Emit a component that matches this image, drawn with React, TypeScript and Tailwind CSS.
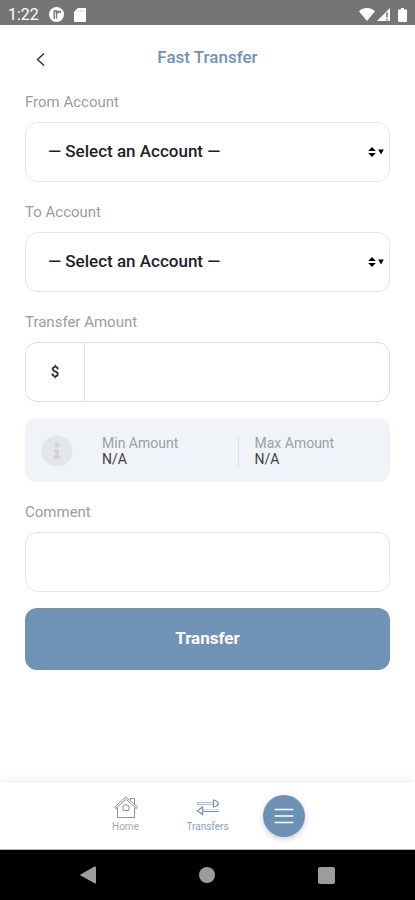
import React, { useState } from 'react';

const ACCOUNTS = [{ value: '', label: '— Select an Account —' }];

const StatusBar: React.FC = () => (
  <div className="flex h-[25px] shrink-0 items-center justify-between bg-[#757575] pt-1 pl-2 pr-2 text-white">
    <div className="flex items-center">
      <span className="w-[41px] text-base leading-5">1:22</span>
      <svg width="15" height="15" viewBox="0 0 15 15" aria-hidden="true">
        <circle cx="7.5" cy="7.5" r="7.5" fill="#fff" />
        <path d="M5.2 12V4h2.3v7.500M9 6.500V4.500h2.200v1.800" fill="none" stroke="#757575" strokeWidth="1.400" />
      </svg>
      <svg className="ml-2.5" width="12" height="14" viewBox="0 0 12 14" aria-hidden="true">
        <path d="M4 0h7a1 1 0 0 1 1 1v12a1 1 0 0 1-1 1H1a1 1 0 0 1-1-1V4z" fill="#fff" />
        <path d="M4.5 2v2M6.8 2v2M9 2v2" stroke="#ccc" strokeWidth="1" />
      </svg>
    </div>
    <div className="flex items-center">
      <svg width="16" height="13" viewBox="0 0 16 13" aria-hidden="true">
        <path d="M8 13 0 3.2C2.2 1.200 5 0 8 0s5.800 1.200 8 3.200z" fill="#fff" />
      </svg>
      <svg className="ml-0.5" width="13" height="13" viewBox="0 0 13 13" aria-hidden="true">
        <path d="M13 0v13H0z" fill="#fff" />
        <path d="M10 4.500v5M10 11v1.500" stroke="#757575" strokeWidth="1.600" />
      </svg>
      <svg className="ml-2" width="9" height="14" viewBox="0 0 9 14" aria-hidden="true">
        <path d="M3 0h3v1.500h2a1 1 0 0 1 1 1V13a1 1 0 0 1-1 1H1a1 1 0 0 1-1-1V2.500a1 1 0 0 1 1-1h2z" fill="#fff" />
      </svg>
    </div>
  </div>
);

interface AccountSelectProps {
  id: string;
  label: string;
}

const AccountSelect: React.FC<AccountSelectProps> = ({ id, label }) => {
  const [value, setValue] = useState('');

  return (
    <div className="mb-5">
      <label htmlFor={id} className="mb-2.5 block text-[15px] leading-5 text-[#9b9b9f]">{label}</label>
      <div className="relative">
        <select
          id={id}
          value={value}
          onChange={(e) => setValue(e.target.value)}
          className="h-[60px] w-full appearance-none rounded-xl border border-[#e6e6e8] bg-white pl-[22px] pr-8 text-[17px] font-medium text-[#1f2025]"
        >
          {ACCOUNTS.map((a) => (
            <option key={a.value} value={a.value}>{a.label}</option>
          ))}
        </select>
        <svg
          className="pointer-events-none absolute right-1.5 top-6 text-black"
          width="16"
          height="12"
          viewBox="0 0 16 12"
          fill="currentColor"
          aria-hidden="true"
        >
          <path d="M4 1 7.800 5H.2zM4 11 .2 7h7.600zM10.200 3.500h5.600L13 8.500z" />
        </svg>
      </div>
    </div>
  );
};

export default function App() {
  const [amount, setAmount] = useState('');
  const [comment, setComment] = useState('');

  return (
    <div className="flex min-h-screen flex-col bg-white font-[Roboto,sans-serif]">
      <StatusBar />

      <header className="grid h-[67px] shrink-0 grid-cols-[1fr_auto_1fr] items-center px-6">
        <button type="button" aria-label="Back" className="flex size-8 items-center justify-center text-[#2e2a4f]">
          <svg width="9" height="14" viewBox="0 0 9 14" fill="none" stroke="currentColor" strokeWidth="1.400" aria-hidden="true">
            <path d="M8 1.500 1.500 7.500 8 13.500" />
          </svg>
        </button>
        <h1 className="pb-0.5 text-[17px] font-medium text-[#7092b5]">Fast Transfer</h1>
      </header>

      <form className="flex flex-1 flex-col px-[25px]" onSubmit={(e) => e.preventDefault()}>
        <AccountSelect id="from" label="From Account" />
        <AccountSelect id="to" label="To Account" />

        <label htmlFor="amount" className="mb-2.5 block text-[15px] leading-5 text-[#9b9b9f]">Transfer Amount</label>
        <div className="flex h-[60px] overflow-hidden rounded-xl border border-[#dedee0]">
          <span className="flex w-[59px] items-center justify-center border-r border-[#dedee0] text-[15px] font-medium text-[#1f2025]">$</span>
          <input
            id="amount"
            inputMode="decimal"
            value={amount}
            onChange={(e) => setAmount(e.target.value)}
            className="min-w-0 flex-1 px-4 text-[17px] outline-none"
          />
        </div>

        {/* Limits */}
        <div className="mt-4 mb-5 flex h-16 items-center rounded-xl bg-[#f0f4f8] pt-px pl-4 text-sm leading-4">
          <svg width="32" height="32" viewBox="0 0 32 32" aria-hidden="true">
            <circle cx="16" cy="16" r="15.500" fill="#e4e7ea" />
            <circle cx="16" cy="10" r="2.400" fill="#d2d4d7" />
            <path d="M13 14h5v7h1.500v3h-7v-3H14v-4h-1z" fill="#d2d4d7" />
          </svg>
          <div className="ml-[29px] flex-1">
            <p className="text-[#9c9fa4]">Min Amount</p>
            <p className="text-[#3f4047]">N/A</p>
          </div>
          <div className="h-8 w-px bg-[#dfe2e6]" />
          <div className="flex-1 pl-4">
            <p className="text-[#9c9fa4]">Max Amount</p>
            <p className="text-[#3f4047]">N/A</p>
          </div>
        </div>

        <label htmlFor="comment" className="mb-2.5 block text-[15px] leading-5 text-[#9b9b9f]">Comment</label>
        <input
          id="comment"
          value={comment}
          onChange={(e) => setComment(e.target.value)}
          className="h-[60px] w-full rounded-xl border border-[#e6e6e8] px-4 text-[17px] outline-none"
        />

        <button type="submit" className="mt-4 h-[62px] w-full rounded-xl bg-[#7092b5] text-[17px] font-bold text-white">
          Transfer
        </button>
      </form>

      <nav className="flex h-[67px] shrink-0 justify-center gap-7 border-b border-[#b5b5b5] bg-white pr-3 shadow-[0_-2px_12px_rgba(0,0,0,0.08)]">
        <a href="#home" className="flex w-[54px] flex-col items-center pt-3 text-[10px] leading-3 text-[#a9a9ad]">
          <svg className="mb-0.5" width="24" height="24" viewBox="0 0 24 24" fill="none" stroke="#929292" strokeWidth="1" aria-hidden="true">
            <path d="M3.500 12.500V22.500h17V12.500M3.500 12.500 1.500 13.500.6 12 12 1.800 23.400 12l-.9 1.500-2-1M2.500 12.800 12 4.300l9.500 8.500M16.500 5.500V3.500h4v5.700" />
            <path d="M9 15.500v-4.500l3-1.500 3 1.500v4.500z" />
          </svg>
          Home
        </a>
        <a href="#transfers" className="flex w-[54px] flex-col items-center pt-3 text-[10px] leading-3 text-[#86a2c2]">
          <svg className="mb-0.5" width="24" height="24" viewBox="0 0 24 24" fill="none" stroke="#7092b5" strokeWidth="1.200" aria-hidden="true">
            <path d="M17 7.500H1.500v2H17" strokeOpacity=".6" />
            <path d="M17.500 5v7c2.500-.5 4.500-2 5-3.500-.5-1.500-2.500-3-5-3.500z" />
            <path d="M7 14.500h15.500" strokeOpacity=".3" />
            <path d="M7 16.500h15.500M6.500 12v7.500L1.500 15.800z" />
          </svg>
          Transfers
        </a>
        <button
          type="button"
          aria-label="Menu"
          className="mt-3 flex size-[42px] items-center justify-center rounded-full bg-[#6d90b5] shadow-[0_2px_6px_rgba(0,0,0,0.2)]"
        >
          <svg width="20" height="16" viewBox="0 0 20 16" stroke="#fff" strokeWidth="1.600" aria-hidden="true">
            <path d="M.5 1.500h19M.5 8h19M.5 14.500h19" />
          </svg>
        </button>
      </nav>

      {/* Android system buttons */}
      <div className="flex h-[50px] shrink-0 items-center justify-around bg-black px-7 text-[#9c9c9c]">
        <button type="button" aria-label="System back">
          <svg width="16" height="18" viewBox="0 0 16 18" fill="currentColor" aria-hidden="true">
            <path d="M15 .5a1 1 0 0 1 1 1v15a1 1 0 0 1-1.500.8L.5 9.600a.7.7 0 0 1 0-1.200L14.500.6z" />
          </svg>
        </button>
        <button type="button" aria-label="System home" className="size-4 rounded-full bg-current" />
        <button type="button" aria-label="Recent apps" className="size-[17px] rounded-xs bg-current" />
      </div>
    </div>
  );
}
